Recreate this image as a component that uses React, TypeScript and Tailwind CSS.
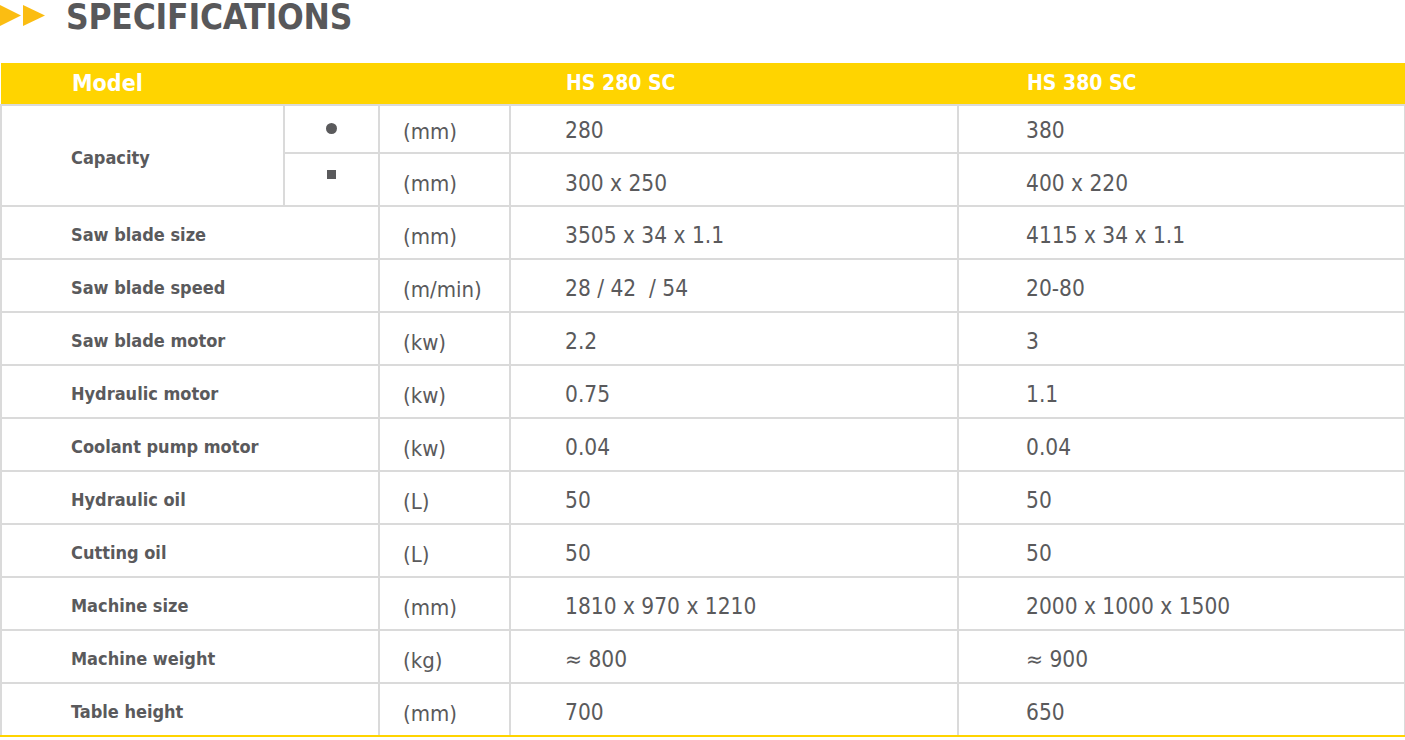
import React from "react";

type Row = { label: string; unit: string; a: string; b: string };

const rows: Row[] = [
  { label: "Saw blade size", unit: "(mm)", a: "3505 x 34 x 1.1", b: "4115 x 34 x 1.1" },
  { label: "Saw blade speed", unit: "(m/min)", a: "28 / 42  / 54", b: "20-80" },
  { label: "Saw blade motor", unit: "(kw)", a: "2.2", b: "3" },
  { label: "Hydraulic motor", unit: "(kw)", a: "0.75", b: "1.1" },
  { label: "Coolant pump motor", unit: "(kw)", a: "0.04", b: "0.04" },
  { label: "Hydraulic oil", unit: "(L)", a: "50", b: "50" },
  { label: "Cutting oil", unit: "(L)", a: "50", b: "50" },
  { label: "Machine size", unit: "(mm)", a: "1810 x 970 x 1210", b: "2000 x 1000 x 1500" },
  { label: "Machine weight", unit: "(kg)", a: "≈ 800", b: "≈ 900" },
  { label: "Table height", unit: "(mm)", a: "700", b: "650" },
];

const font = {
  fontFamily: '"Liberation Sans Narrow", "DejaVu Sans Condensed", "Liberation Sans", sans-serif',
};

const cell = "border-2 border-[#dadada] text-[#5a5a5c]";

export default function App() {
  return (
    <div className="w-[1405px] h-[740px] bg-white overflow-hidden" style={font}>
      {/* Title */}
      <div className="flex items-center h-[32px]">
        <svg width="46" height="21" viewBox="0 0 46 21" className="mt-[-2px] shrink-0">
          <polygon points="0,0 21,10.5 0,21" fill="#fbbd12" />
          <polygon points="23,0 45,10.5 23,21" fill="#fbbd12" />
        </svg>
        <h1 className="ml-[20px] text-[35px] font-bold leading-[32px] text-[#58585a] tracking-[-0.2px] mt-[1px]">
          SPECIFICATIONS
        </h1>
      </div>

      <table className="mt-[31px] w-[1404px] table-fixed border-collapse">
        <colgroup>
          <col className="w-[283px]" />
          <col className="w-[95px]" />
          <col className="w-[131px]" />
          <col className="w-[448px]" />
          <col className="w-[447px]" />
        </colgroup>
        <thead>
          <tr className="h-[42px] bg-[#ffd400] text-white text-[21px] font-bold">
            <th colSpan={3} className="text-left pl-[71px] font-bold text-[23px]">Model</th>
            <th className="text-left pl-[56px] font-bold">HS 280 SC</th>
            <th className="text-left pl-[69px] font-bold">HS 380 SC</th>
          </tr>
        </thead>
        <tbody>
          <tr className="h-[48px]">
            <td rowSpan={2} className={`${cell} pl-[69px] pt-[3px] text-[18px] font-bold`}>Capacity</td>
            <td className={`${cell} text-center`}>
              <span className="inline-block w-[11px] h-[11px] rounded-full bg-[#5a5a5c]" />
            </td>
            <td className={`${cell} pl-[23px] text-[22px] pt-[4px]`}>(mm)</td>
            <td className={`${cell} pl-[54px] text-[22.5px] pt-[4px]`}>280</td>
            <td className={`${cell} pl-[67px] text-[22.5px] pt-[4px]`}>380</td>
          </tr>
          <tr className="h-[53px]">
            <td className={`${cell} text-center`}>
              <span className="inline-block w-[9px] h-[9px] bg-[#5a5a5c] mb-[6px]" />
            </td>
            <td className={`${cell} pl-[23px] text-[22px] pt-[8px]`}>(mm)</td>
            <td className={`${cell} pl-[54px] text-[22.5px] pt-[8px]`}>300 x 250</td>
            <td className={`${cell} pl-[67px] text-[22.5px] pt-[8px]`}>400 x 220</td>
          </tr>
          {rows.map((r, i) => {
            const last = i === rows.length - 1 ? "border-b-[#ffd400]" : "";
            return (
              <tr key={r.label} className="h-[53px]">
                <td colSpan={2} className={`${cell} pl-[69px] pt-[4px] text-[18px] font-bold ${last}`}>
                  {r.label}
                </td>
                <td className={`${cell} pl-[23px] text-[22px] pt-[7px] ${last}`}>{r.unit}</td>
                <td className={`${cell} pl-[54px] text-[22.5px] pt-[7px] whitespace-pre ${last}`}>{r.a}</td>
                <td className={`${cell} pl-[67px] text-[22.5px] pt-[7px] ${last}`}>{r.b}</td>
              </tr>
            );
          })}
        </tbody>
      </table>
    </div>
  );
}
